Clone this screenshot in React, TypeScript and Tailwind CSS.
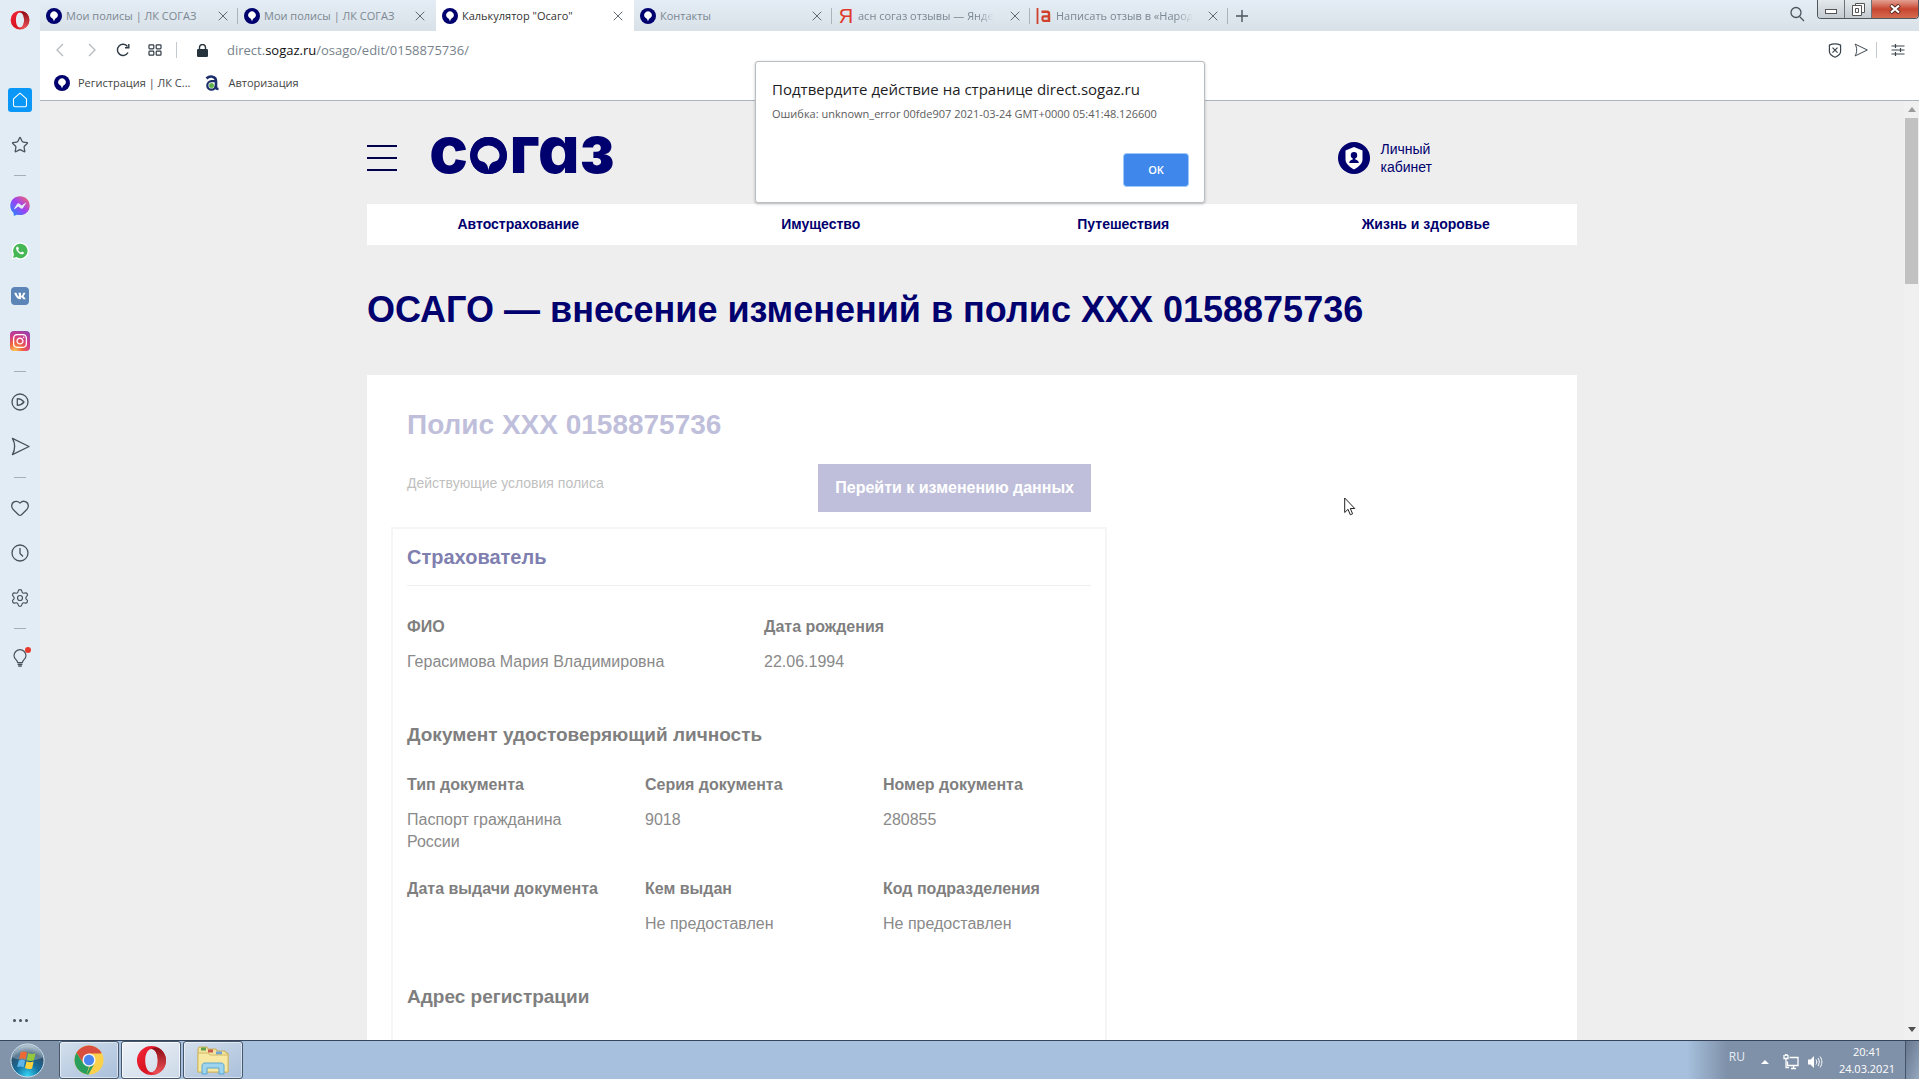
import React from 'react';
import {
  FaFacebookMessenger,
  FaInstagram,
  FaVk,
} from 'react-icons/fa';
import { Heart, Settings, Star, X } from 'lucide-react';

function SogazMark({ className }: { className: string }) {
  return (
    <svg viewBox="0 0 16 16" className={className} aria-hidden="true">
      <circle cx="8" cy="8" r="8" fill="#00006e" />
      <path d="M8 13.4C7.4 11.4 6.6 10.6 5.4 9.8a3.7 3.7 0 1 1 5.2 0C9.4 10.6 8.6 11.4 8 13.4z" fill="#fff" />
    </svg>
  );
}

function OperaMark({ className }: { className: string }) {
  return (
    <svg viewBox="0 0 32 32" className={className} aria-hidden="true">
      <defs>
        <linearGradient id="operaRed" x1="0" y1="0" x2="1" y2="1">
          <stop offset="0" stopColor="#f5273d" />
          <stop offset="0.55" stopColor="#d8131f" />
          <stop offset="1" stopColor="#e8474c" />
        </linearGradient>
        <linearGradient id="operaDark" x1="0" y1="0" x2="0" y2="1">
          <stop offset="0" stopColor="#8c0d16" />
          <stop offset="1" stopColor="#ee5257" />
        </linearGradient>
      </defs>
      <path fillRule="evenodd" fill="url(#operaRed)" d="M16 1a15 15 0 1 0 0 30a15 15 0 1 0 0-30zM16 4c4 0 6.500 5.400 6.500 12S20 28 16 28S9.500 22.600 9.500 16S12 4 16 4z" />
      <path fill="url(#operaDark)" d="M16 4c2.500-2 6-2 9 0c3.500 2.600 6 7 6 12s-2.500 9.400-6 12c-3 2-6.500 2-9 0c4 0 6.500-5.400 6.500-12S20 4 16 4z" />
    </svg>
  );
}

function YandexMark() {
  return (
    <span className="flex w-4 shrink-0 justify-center font-['Liberation_Sans'] text-[20px] leading-5 text-[#e0392b]">Я</span>
  );
}

function AsnMark() {
  return (
    <svg viewBox="0 0 16 16" className="size-4 shrink-0" fill="none" stroke="#d0402a" aria-hidden="true">
      <path d="M1.500 0v16" strokeWidth="1.800" />
      <path d="M5.500 3.800h5.500c1.200 0 2 .8 2 2V14" strokeWidth="2.400" />
      <rect x="6.500" y="8.300" width="6.500" height="4.500" rx="1.200" strokeWidth="2.200" />
    </svg>
  );
}

function AuthMark() {
  return (
    <svg viewBox="0 0 16 16" className="size-4 shrink-0" aria-hidden="true">
      <path d="M2.500 3.500C5.500.5 12 .8 12 6v6.500c0 1.200 1 1.500 2.500 1.500" fill="none" stroke="#1d2f6b" strokeWidth="2.600" />
      <path d="M12 6.200H7.500a4.200 4.200 0 1 0 4.200 4.200" fill="none" stroke="#1d2f6b" strokeWidth="2.200" />
      <circle cx="7.500" cy="10.500" r="2.500" fill="#62b34a" />
    </svg>
  );
}

function PlaneIcon({ className }: { className: string }) {
  return (
    <svg viewBox="0 0 20 20" className={className} fill="none" stroke="currentColor" strokeWidth="1.400" strokeLinejoin="round" aria-hidden="true">
      <path d="M1.500 1.500l17.500 8.500L1.500 18.500C4.600 13 4.600 7 1.500 1.500z" />
    </svg>
  );
}

const tabs = [
  { title: 'Мои полисы | ЛК СОГАЗ', icon: <SogazMark className="size-4 shrink-0" /> },
  { title: 'Мои полисы | ЛК СОГАЗ', icon: <SogazMark className="size-4 shrink-0" /> },
  { title: 'Калькулятор "Осаго"', icon: <SogazMark className="size-4 shrink-0" />, active: true },
  { title: 'Контакты', icon: <SogazMark className="size-4 shrink-0" /> },
  { title: 'асн согаз отзывы — Янде', icon: <YandexMark />, faded: true },
  { title: 'Написать отзыв в «Народ', icon: <AsnMark />, faded: true },
];

function TabStrip() {
  return (
    <div className="flex h-[31px] shrink-0 bg-gradient-to-b from-[#e4edf5] to-[#d9e1e8]">
      {tabs.map((tab, i) => (
        <div
          key={i}
          className={
            tab.active
              ? 'flex w-[198px] items-center bg-white pl-1.5 pr-2 text-[#333]'
              : 'flex w-[198px] items-center pl-1.5 pr-2 text-[#7b8792]'
          }
        >
          <button className="flex min-w-0 flex-1 items-center gap-1 text-left">
            {tab.icon}
            <span
              className={
                tab.faded
                  ? 'whitespace-nowrap text-[11px] leading-4 [mask-image:linear-gradient(to_right,black_88%,transparent)]'
                  : 'whitespace-nowrap text-[11px] leading-4'
              }
            >
              {tab.title}
            </span>
          </button>
          <button aria-label="Закрыть вкладку" className="shrink-0 text-[#4b545c]">
            <X className="size-4" strokeWidth={1.3} />
          </button>
          {!tab.active && i !== 1 && <span className="-mr-2 ml-1.5 h-4 w-px shrink-0 bg-[#aab4bd]" />}
        </div>
      ))}
      <button aria-label="Новая вкладка" className="px-2 text-[#4b545c]">
        <svg viewBox="0 0 12 12" className="size-3" stroke="currentColor" strokeWidth="1.400"><path d="M6 0v12M0 6h12" /></svg>
      </button>
      <div className="ml-auto flex items-start">
        <button aria-label="Поиск" className="mr-3 mt-1.5 text-[#4b545c]">
          <svg viewBox="0 0 16 16" className="size-4" fill="none" stroke="currentColor" strokeWidth="1.300"><circle cx="7" cy="6.500" r="5" /><path d="M10.500 10.500L15 15" /></svg>
        </button>
        <div className="flex h-[19px] overflow-hidden rounded-b-[4px] border border-t-0 border-[#4f565c]">
          <button aria-label="Свернуть" className="flex w-[27px] items-center justify-center border-r border-[#6b7278] bg-gradient-to-b from-[#e4e9ec] to-[#c3cad0]">
            <span className="mt-1 h-[5px] w-3 border border-[#555] bg-white" />
          </button>
          <button aria-label="Развернуть" className="flex w-[27px] items-center justify-center border-r border-[#6b7278] bg-gradient-to-b from-[#e4e9ec] to-[#c3cad0]">
            <svg viewBox="0 0 13 13" className="size-[13px]" fill="#fff" stroke="#555"><path d="M3.500.5h9v9h-9z" /><path d="M.5 2.500h9v10h-9z" /><path d="M3.500 5.500h3v4h-3z" /></svg>
          </button>
          <button aria-label="Закрыть" className="flex w-[46px] items-center justify-center bg-gradient-to-b from-[#e3a093] via-[#c8452f] to-[#d46a50]">
            <svg viewBox="0 0 12 10" className="h-[10px] w-3"><path d="M1.500 1l9 8M10.500 1l-9 8" stroke="#5a2a22" strokeWidth="4" /><path d="M2 1.500l8 7M10 1.500l-8 7" stroke="#fff" strokeWidth="2.200" /></svg>
          </button>
        </div>
      </div>
    </div>
  );
}

function Toolbar() {
  return (
    <div className="h-[70px] shrink-0 border-b border-[#a9b5c0] bg-white">
      <div className="flex h-[38px] items-center pl-3">
        <button aria-label="Назад" className="flex w-8 pl-1 text-[#b5babf]">
          <svg viewBox="0 0 8 14" className="h-3.5 w-2" fill="none" stroke="currentColor" strokeWidth="1.300"><path d="M7 1L1 7l6 6" /></svg>
        </button>
        <button aria-label="Вперёд" className="flex w-8 pl-1 text-[#b5babf]">
          <svg viewBox="0 0 8 14" className="h-3.5 w-2" fill="none" stroke="currentColor" strokeWidth="1.300"><path d="M1 1l6 6-6 6" /></svg>
        </button>
        <button aria-label="Обновить" className="flex w-8 text-[#2f3a44]">
          <svg viewBox="0 0 14 14" className="size-3.5" fill="none" stroke="currentColor" strokeWidth="1.400"><path d="M12 9.500A5.600 5.600 0 1 1 11.500 3.500" /><path d="M9 4.700h3.800V1" /></svg>
        </button>
        <button aria-label="Экспресс-панель" className="flex w-7 text-[#2f3a44]">
          <svg viewBox="0 0 14 12" className="h-3 w-3.5" fill="none" stroke="currentColor" strokeWidth="1.200"><rect x="1" y=".8" width="4.800" height="4" rx=".8" /><rect x="8.200" y=".8" width="4.800" height="4" rx=".8" /><rect x="1" y="7.200" width="4.800" height="4" rx=".8" /><rect x="8.200" y="7.200" width="4.800" height="4" rx=".8" /></svg>
        </button>
        <span className="h-4 w-px bg-[#c4c9ce]" />
        <svg viewBox="0 0 11 13" className="ml-5 h-[13px] w-[11px]" aria-hidden="true"><rect x="0" y="5" width="11" height="8" rx="1.200" fill="#26323c" /><path d="M2.500 6V3.500a3 3 0 0 1 6 0V6" fill="none" stroke="#26323c" strokeWidth="1.400" /></svg>
        <button className="ml-[19px] text-[13px] leading-5 text-[#77828c]">
          direct.<span className="text-[#111]">sogaz.ru</span>/osago/edit/0158875736/
        </button>
        <div className="ml-auto flex items-center pr-3.5 text-[#3a444d]">
          <button aria-label="Блокировка рекламы">
            <svg viewBox="0 0 14 15" className="h-[15px] w-3.5" fill="none" stroke="currentColor" strokeWidth="1.200"><path d="M7 .8c2 0 4 .5 5.600 1.300v6.400c0 2.500-3 4.600-5.600 5.700C4.400 13.100 1.400 11 1.400 8.500V2.100C3 1.300 5 .8 7 .8z" /><path d="M4.500 4.700l5 5M9.500 4.700l-5 5" /></svg>
          </button>
          <button aria-label="Мой поток" className="ml-3"><PlaneIcon className="size-3.5" /></button>
          <span className="ml-2 h-4 w-px bg-[#c4c9ce]" />
          <button aria-label="Простая настройка" className="ml-3.5">
            <svg viewBox="0 0 14 12" className="h-3 w-3.5" fill="none" stroke="currentColor" strokeWidth="1.200"><path d="M.5 2h13M.5 6h13M.5 10h13M4.500 0v4M9.500 4v4M4.500 8v4" /></svg>
          </button>
        </div>
      </div>
      <nav className="flex h-7 items-center gap-3.5 pl-3.5 text-[11px] text-[#444]">
        <a href="#reg" className="flex items-center gap-2"><SogazMark className="size-4" />Регистрация | ЛК С...</a>
        <a href="#auth" className="flex items-center gap-2"><AuthMark />Авторизация</a>
      </nav>
    </div>
  );
}

function Slot({ label, children }: { label: string; children: React.ReactNode }) {
  return (
    <button aria-label={label} className="flex h-[45px] w-full shrink-0 items-center justify-center">{children}</button>
  );
}

function Dash() {
  return (
    <div className="flex h-4 w-full shrink-0 items-center justify-center"><span className="h-px w-3 bg-[#a5b0ba]" /></div>
  );
}

function SideBar() {
  return (
    <aside className="flex w-10 shrink-0 flex-col items-center bg-[#e2ecf4] text-[#48525c]">
      <button aria-label="Меню Opera" className="flex h-[77px] pt-2.5"><OperaMark className="size-5" /></button>
      <Slot label="Экспресс-панель">
        <span className="flex size-6 items-center justify-center rounded-[3px] bg-[#0a97f7] text-white">
          <svg viewBox="0 0 16 16" className="size-4" fill="none" stroke="currentColor" strokeWidth="1.100" strokeLinejoin="round"><path d="M8 1.200l6.500 5.600V13a1.800 1.800 0 0 1-1.800 1.800H3.300A1.800 1.800 0 0 1 1.500 13V6.800z" /></svg>
        </span>
      </Slot>
      <Slot label="Закладки"><Star className="size-[18px]" strokeWidth={1.7} /></Slot>
      <Dash />
      <Slot label="Messenger">
        <svg width="0" height="0" className="absolute" aria-hidden="true">
          <linearGradient id="msgr" x1="0" y1="1" x2="1" y2="0"><stop offset="0" stopColor="#1491ff" /><stop offset="0.5" stopColor="#9b41f5" /><stop offset="1" stopColor="#ff6a62" /></linearGradient>
        </svg>
        <FaFacebookMessenger className="size-5" style={{ fill: 'url(#msgr)' }} />
      </Slot>
      <Slot label="WhatsApp">
        <svg viewBox="0 0 18 18" className="size-[18px]" aria-hidden="true"><path d="M.5 17.500l1.300-4.600A8.500 8.500 0 1 1 5 16.300z" fill="#fff" /><path d="M2 16l1-3.600A7.200 7.200 0 1 1 5.400 15z" fill="#45b755" /><path d="M5.800 4.800c-1.200 1-.9 2.900.8 4.900s4 3.300 5.600 2.300c.6-.4.9-1 .7-1.500l-1.900-.9-.9 1c-1.300-.5-2.500-1.600-3-2.900l.8-.9L7.100 4.700z" fill="#fff" /></svg>
      </Slot>
      <Slot label="ВКонтакте">
        <span className="flex size-[18px] items-center justify-center rounded-[4px] bg-[#5b85b7] text-white"><FaVk className="size-3" /></span>
      </Slot>
      <Slot label="Instagram">
        <span className="flex size-5 items-center justify-center rounded-[4px] bg-[radial-gradient(circle_at_25%_100%,#fdc859_0%,#f0653f_30%,#d33a86_60%,#8544b8_100%)] text-white"><FaInstagram className="size-4" /></span>
      </Slot>
      <Dash />
      <Slot label="Плеер">
        <svg viewBox="0 0 18 18" className="size-[18px]" fill="none" stroke="currentColor" strokeWidth="1.300" strokeLinejoin="round"><circle cx="9" cy="9" r="8" /><path d="M6.300 5.700C9 5.900 11.500 7 13 9c-1.500 2-4 3.100-6.700 3.300z" /></svg>
      </Slot>
      <Slot label="Мой поток"><PlaneIcon className="size-[19px]" /></Slot>
      <Dash />
      <Slot label="Избранное"><Heart className="size-5" strokeWidth={1.5} /></Slot>
      <Slot label="История">
        <svg viewBox="0 0 18 18" className="size-[18px]" fill="none" stroke="currentColor" strokeWidth="1.300"><circle cx="9" cy="9" r="8" /><path d="M9 4v5.500l3 3" /></svg>
      </Slot>
      <Slot label="Настройки"><Settings className="size-5" strokeWidth={1.4} /></Slot>
      <Dash />
      <Slot label="Подсказки">
        <span className="relative">
          <svg viewBox="0 0 14 19" className="h-[19px] w-3.5" fill="none" stroke="currentColor" strokeWidth="1.200"><path d="M4.600 13.500C4.600 11 1 10 1 6.700a6 6 0 0 1 12 0c0 3.300-3.600 4.300-3.600 6.800z" /><path d="M4.600 15.200h4.800M5.200 17h3.600" strokeWidth="1.600" /></svg>
          <span className="absolute -right-1 -top-0.5 size-1.5 rounded-full bg-[#e83a2c]" />
        </span>
      </Slot>
      <button aria-label="Ещё" className="mb-[18px] mt-auto flex gap-[3px]">
        <span className="size-[3px] rounded-full bg-current" />
        <span className="size-[3px] rounded-full bg-current" />
        <span className="size-[3px] rounded-full bg-current" />
      </button>
    </aside>
  );
}

function Logo() {
  return (
    <a href="#home" className="flex items-center font-['Inter'] text-[66px] font-extrabold leading-[64px] text-[#00006e] [font-feature-settings:'cv11']">
      с
      <span className="relative">
        о
        <svg viewBox="0 0 37 37" className="absolute inset-x-0 bottom-[7px] mx-auto size-[37px]" aria-hidden="true">
          <circle cx="18.500" cy="18.500" r="18.500" fill="#00006e" />
          <path d="M18.500 33.500C18 28.500 16 25 11.500 24.300C8.800 23.500 7.500 21 7.500 18.500a11 10 0 0 1 22 0c0 2.500-1.300 5-4 5.800C21 25 19 28.500 18.500 33.500z" fill="#eee" />
        </svg>
      </span>
      газ
    </a>
  );
}

function SiteHeader() {
  return (
    <header className="flex h-[103px] items-center">
      <button aria-label="Меню" className="mt-2.5 flex w-[30px] flex-col gap-2.5">
        <span className="h-0.5 bg-[#00004d]" />
        <span className="h-0.5 bg-[#00004d]" />
        <span className="h-0.5 bg-[#00004d]" />
      </button>
      <div className="mb-2 ml-8"><Logo /></div>
      <a href="#cabinet" className="ml-auto mr-[145px] mt-2.5 flex items-center gap-2.5 text-[14px] leading-[18px] text-[#00006e]">
        <svg viewBox="0 0 32 32" className="size-8" aria-hidden="true">
          <circle cx="16" cy="16" r="16" fill="#00006e" />
          <path d="M16 5l8.500 3.500v9c0 4-4 7.500-8.500 10c-4.500-2.500-8.500-6-8.500-10v-9z" fill="#fff" />
          <circle cx="16" cy="13.200" r="3.200" fill="#00006e" />
          <path d="M14.700 15h2.600v2.500c2 .5 3.500 1.500 3.500 3.500h-9.600c0-2 1.500-3 3.500-3.500z" fill="#00006e" />
        </svg>
        <span>Личный<br />кабинет</span>
      </a>
    </header>
  );
}

function Field({ label, value }: { label: string; value?: string }) {
  return (
    <div className="pr-8">
      <dt className="whitespace-nowrap text-[16px] font-bold leading-[22px] text-[#7f7f7f]">{label}</dt>
      <dd className="mt-[13px] text-[16px] leading-[22px] text-[#8a8a8a]">{value}</dd>
    </div>
  );
}

function PolicyCard() {
  return (
    <section className="flex-1 bg-white px-6 pt-8">
      <div className="w-[716px]">
        <h2 className="px-4 text-[28px] font-bold leading-9 text-[#bfbfdb]">Полис ХХХ 0158875736</h2>
        <div className="mt-[21px] flex items-start justify-between px-4">
          <p className="mt-2 text-[14px] leading-[22px] text-[#bfbfbf]">Действующие условия полиса</p>
          <button className="h-12 bg-[#bfbfdb] px-[17px] text-[16px] font-bold text-white">Перейти к изменению данных</button>
        </div>
        <div className="mt-[15px] h-[800px] border-2 border-[#f5f5f5] px-3.5 pt-3.5">
          <h3 className="text-[20px] font-bold leading-7 text-[#7f7fb0]">Страхователь</h3>
          <hr className="mt-3.5 border-[#f0f0f0]" />
          <dl className="mt-[30px] grid grid-cols-[357px_1fr]">
            <Field label="ФИО" value="Герасимова Мария Владимировна" />
            <Field label="Дата рождения" value="22.06.1994" />
          </dl>
          <h4 className="mt-12 text-[19px] font-bold leading-7 text-[#7f7f7f]">Документ удостоверяющий личность</h4>
          <dl className="mt-[25px] grid grid-cols-[238px_238px_1fr] gap-y-[25px]">
            <Field label="Тип документа" value="Паспорт гражданина России" />
            <Field label="Серия документа" value="9018" />
            <Field label="Номер документа" value="280855" />
            <Field label="Дата выдачи документа" />
            <Field label="Кем выдан" value="Не предоставлен" />
            <Field label="Код подразделения" value="Не предоставлен" />
          </dl>
          <h4 className="mt-12 text-[19px] font-bold leading-7 text-[#7f7f7f]">Адрес регистрации</h4>
        </div>
      </div>
    </section>
  );
}

function Page() {
  return (
    <div className="flex min-h-0 flex-1">
      <main className="min-w-0 flex-1 overflow-hidden bg-[#eee] font-['Liberation_Sans',Arial,sans-serif]">
        <div className="mx-auto flex max-w-[1210px] flex-col">
          <SiteHeader />
          <nav className="grid h-[41px] grid-cols-4 place-items-center bg-white text-[14px] font-bold text-[#00006e]">
            <a href="#auto">Автострахование</a>
            <a href="#property">Имущество</a>
            <a href="#travel">Путешествия</a>
            <a href="#life">Жизнь и здоровье</a>
          </nav>
          <h1 className="my-[42px] text-[36px] font-bold leading-[46px] text-[#00006e]">ОСАГО — внесение изменений в полис ХХХ 0158875736</h1>
          <PolicyCard />
        </div>
      </main>
      <div className="flex w-[15px] shrink-0 flex-col items-center bg-[#f0f0f0]">
        <span className="mt-1.5 size-0 border-x-4 border-b-[5px] border-x-transparent border-b-[#9a9a9a]" />
        <span className="mt-1.5 h-[166px] w-[13px] bg-[#c1c1c1]" />
        <span className="mb-2 mt-auto size-0 border-x-4 border-t-[5px] border-x-transparent border-t-[#505050]" />
      </div>
    </div>
  );
}

function AlertDialog() {
  return (
    <div role="alertdialog" aria-labelledby="alert-title" className="absolute left-[755px] top-[61px] flex h-[142px] w-[450px] flex-col rounded-[3px] border border-[#b9bec3] bg-white px-4 pb-4 pt-4 shadow-[0_1px_3px_rgba(0,0,0,0.25)]">
      <h2 id="alert-title" className="text-[15px] leading-[22px] text-[#1d1d1f]">Подтвердите действие на странице direct.sogaz.ru</h2>
      <p className="mt-1 whitespace-nowrap text-[11px] leading-5 text-[#5c5c5c]">Ошибка: unknown_error 00fde907 2021-03-24 GMT+0000 05:41:48.126600</p>
      <button className="mt-auto h-8 w-16 self-end rounded-[3px] bg-[#3f87ea] text-[11px] font-semibold text-white ring-1 ring-[#9cc8fb]">OK</button>
    </div>
  );
}

function ChromeMark() {
  return (
    <svg viewBox="0 0 32 32" className="size-[30px]" aria-hidden="true">
      <circle cx="16" cy="16" r="15.500" fill="#fbd14b" />
      <path d="M2.600 8.300A15.500 15.500 0 0 1 29.400 8.300L28.500 9H16L9.900 19.500z" fill="#d94f3f" />
      <path d="M2.600 8.300L9.900 19.500 16 23l-2.500 8.300A15.500 15.500 0 0 1 2.600 8.300z" fill="#2a9e5c" />
      <path d="M22.100 19.500L15.500 31.500h-2L17 23z" fill="#2a9e5c" />
      <circle cx="16" cy="16" r="7" fill="#f4f4f4" />
      <circle cx="16" cy="16" r="5.500" fill="#4a85ee" />
    </svg>
  );
}

function FolderMark() {
  return (
    <svg viewBox="0 0 34 30" className="h-[30px] w-[34px]" aria-hidden="true">
      <path d="M2 4l1-2h8l1 2h8l1 2h8l1 2h2v19H2z" fill="#f3e3a0" stroke="#c9ac55" />
      <path d="M5 2.500h5v3H5z" fill="#5fa04a" /><path d="M12 4.500h5v3h-5z" fill="#c85b45" /><path d="M20 6.500h6v3h-6z" fill="#6fa7d2" />
      <path d="M2 8h10l2 2h18v17H2z" fill="#f7e9a4" stroke="#d3b964" />
      <path d="M6 29v-8c0-2 1-3 3-3h16c2 0 3 1 3 3v8h-5v-6H11v6z" fill="#9fd4ee" stroke="#5aa7cf" />
    </svg>
  );
}

function StartOrb() {
  return (
    <svg viewBox="0 0 36 36" className="size-[35px]" aria-hidden="true">
      <defs>
        <radialGradient id="orb" cx="0.5" cy="0.95" r="0.9"><stop offset="0" stopColor="#35d3f5" /><stop offset="0.4" stopColor="#15719f" /><stop offset="0.75" stopColor="#2b506d" /><stop offset="1" stopColor="#9fb6c6" /></radialGradient>
      </defs>
      <circle cx="18" cy="18" r="17" fill="url(#orb)" stroke="#cfe0ec" />
      <path d="M2 15a16.500 16.500 0 0 1 32 0c-9 4-22 4-32 0z" fill="#fff" opacity=".25" />
      <path d="M11 9.500c2.500-1.200 4.500-1 6.500.2l-1.600 7.200c-2.200-1.200-4.200-1.200-6.600-.2z" fill="#ee6a35" />
      <path d="M18.800 10.200c2.500 1.400 5 1.400 7.500.3l-1.700 7.300c-2.500 1-4.800.9-7.300-.3z" fill="#93c83d" />
      <path d="M9 18c2.400-1 4.400-1 6.600.2L14 25c-2.200-1.200-4.200-1.200-6.600-.2z" fill="#5fb4ea" />
      <path d="M17 18.800c2.400 1.200 4.800 1.300 7.300.3l-1.600 7c-2.500 1.100-5 .9-7.300-.4z" fill="#fbd13c" />
    </svg>
  );
}

function TaskButton({ label, active, children }: { label: string; active?: boolean; children: React.ReactNode }) {
  return (
    <button
      aria-label={label}
      className={
        active
          ? 'flex w-[60px] items-center justify-center rounded-[3px] border border-[#46566b] bg-gradient-to-br from-[#eef2f7] to-[#ccd9e8] ring-1 ring-inset ring-white/70'
          : 'flex w-[60px] items-center justify-center rounded-[3px] border border-[#46566b] bg-gradient-to-br from-[#d3dfec] to-[#a9bfda] ring-1 ring-inset ring-white/50'
      }
    >
      {children}
    </button>
  );
}

function Taskbar() {
  return (
    <footer className="flex h-[39px] shrink-0 border-t border-[#35465c] bg-[#a6c0dd] font-['Open_Sans']">
      <button aria-label="Пуск" className="flex w-[59px] items-center bg-[#8294aa] pl-2.5"><StartOrb /></button>
      <div className="flex gap-0.5">
        <TaskButton label="Google Chrome"><ChromeMark /></TaskButton>
        <TaskButton label="Opera" active><OperaMark className="size-[31px]" /></TaskButton>
        <TaskButton label="Проводник"><FolderMark /></TaskButton>
      </div>
      <div className="ml-auto flex items-center bg-[linear-gradient(to_right,#a6c0dd,#7f91a9_40px)] pl-[42px] text-[11px] text-white">
        <span className="mb-1.5 text-[12px] text-[#e4ebf3]">RU</span>
        <button aria-label="Скрытые значки" className="ml-4 mt-1"><span className="block size-0 border-x-4 border-b-4 border-x-transparent border-b-white" /></button>
        <svg viewBox="0 0 16 16" className="ml-3.5 mt-1 size-4" fill="none" stroke="#fff" strokeWidth="1.300" aria-hidden="true"><path d="M6.500 3.500h8.500v8H4.500v-4M8 14.500h5M10.500 12v2" /><path d="M1 1v3.500h4V1M2.500 0v2M4 0v2M3 4.500v9h3" /></svg>
        <svg viewBox="0 0 16 14" className="ml-2 mt-1 h-3.5 w-4" aria-hidden="true"><path d="M1 4.500h2.500L7 1v12L3.500 9.500H1z" fill="#fff" /><path d="M9 4.500c1 1.500 1 3.500 0 5M11 3c1.700 2.500 1.700 5.500 0 8M13 1.500c2.500 3.500 2.500 7.500 0 11" fill="none" stroke="#fff" /></svg>
        <div className="ml-4 mr-2.5 text-center leading-[17px]"><div>20:41</div><div>24.03.2021</div></div>
        <button aria-label="Свернуть все окна" className="h-full w-3.5 border-l border-[#44546a] bg-gradient-to-br from-[#66768d] to-[#95a8c0]" />
      </div>
    </footer>
  );
}

export default function App() {
  return (
    <div className="relative flex h-screen flex-col overflow-hidden font-['Open_Sans','Noto_Sans',sans-serif]">
      <div className="flex min-h-0 flex-1">
        <SideBar />
        <div className="flex min-w-0 flex-1 flex-col">
          <TabStrip />
          <Toolbar />
          <Page />
        </div>
      </div>
      <Taskbar />
      <AlertDialog />
      <svg viewBox="0 0 12 19" className="absolute left-[1344px] top-[497px] h-[19px] w-3" aria-hidden="true">
        <path d="M.7 1v14.500l3.300-3.200 2.300 5.500 2.300-1-2.300-5.300h4.500z" fill="#fff" stroke="#222" />
      </svg>
    </div>
  );
}
